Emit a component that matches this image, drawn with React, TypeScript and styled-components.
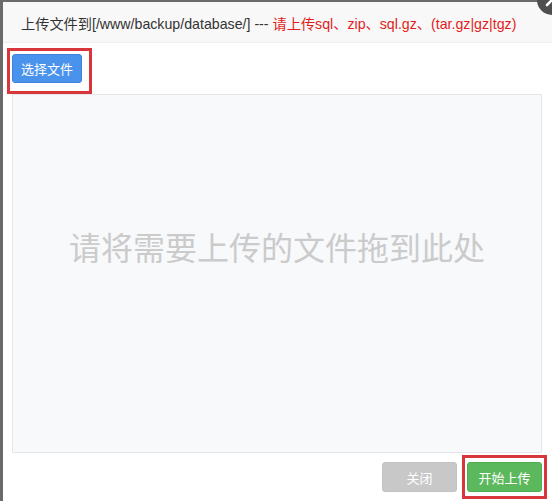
import React from "react";
import styled, { createGlobalStyle } from "styled-components";

const GlobalStyle = createGlobalStyle`
  html, body {
    margin: 0;
    padding: 0;
    background: #6a6a6a;
    overflow: hidden;
  }
  body {
    font-family: "Noto Sans", "Noto Sans CJK SC", sans-serif;
  }
`;

const App: React.FC = () => {
  return (
    <>
      <GlobalStyle />
      <Screen>
        <Dialog>
          <TitleBar>
            上传文件到[/www/backup/database/] ---{" "}
            <Warn>请上传sql、zip、sql.gz、(tar.gz|gz|tgz)</Warn>
          </TitleBar>

          <Toolbar>
            <Mark $pad="3px 7px 8px 2px">
              <Button $tone="blue">选择文件</Button>
            </Mark>
          </Toolbar>

          <DropZone>
            <DropHint>请将需要上传的文件拖到此处</DropHint>
          </DropZone>

          <Footer>
            <Button $tone="gray">关闭</Button>
            <Mark $pad="4px 2px">
              <Button $tone="green">开始上传</Button>
            </Mark>
          </Footer>

          <CloseIcon aria-label="close">
            <svg width="30" height="30" viewBox="0 0 30 30">
              <circle cx="15" cy="15" r="15" fill="#4f4f4f" />
              <path
                d="M10 10 L20 20 M20 10 L10 20"
                stroke="#fff"
                strokeWidth="2.6"
                strokeLinecap="round"
              />
            </svg>
          </CloseIcon>
        </Dialog>
      </Screen>
    </>
  );
};

export default App;

/* ===================== styles ===================== */
const Screen = styled.div`
  width: 552px;
  height: 501px;
  padding: 2px 0 0 3px;
  box-sizing: border-box;
`;

const Dialog = styled.div`
  position: relative;
  width: 549px;
  height: 499px;
  background: #fff;
  display: flex;
  flex-direction: column;
`;

const TitleBar = styled.div`
  height: 41px;
  box-sizing: border-box;
  line-height: 40px;
  padding: 2px 0 0 18px;
  background: #f8f8f8;
  border-bottom: 1px solid #eee;
  color: #333;
  font-family: "Liberation Sans", "Noto Sans CJK SC", sans-serif;
  font-size: 14.2px;
  white-space: nowrap;
  overflow: hidden;
`;

const Warn = styled.span`
  color: #e21d1d;
`;

const Toolbar = styled.div`
  display: flex;
  padding: 5px 0 0 4px;
`;

const Mark = styled.div<{ $pad: string }>`
  display: flex;
  border: 3px solid #d9363b;
  padding: ${({ $pad }) => $pad};
`;

const tones = {
  blue: { bg: "#4a93ec", border: "#3d84da" },
  gray: { bg: "#c8c8c8", border: "#c2c2c2" },
  green: { bg: "#5cb85c", border: "#4fae4f" },
};

const Button = styled.button<{ $tone: keyof typeof tones }>`
  height: ${({ $tone }) => ($tone === "blue" ? "29px" : "30px")};
  width: ${({ $tone }) => ($tone === "blue" ? "70px" : "75px")};
  padding: 0;
  border: 1px solid ${({ $tone }) => tones[$tone].border};
  border-radius: 3px;
  background: ${({ $tone }) => tones[$tone].bg};
  color: #fff;
  font-family: inherit;
  font-size: 13px;
  cursor: pointer;
`;

const DropZone = styled.div`
  margin-left: 9px;
  width: 530px;
  height: 359px;
  box-sizing: border-box;
  border: 1px solid #e4e6ea;
  background: #f8f9fb;
  display: flex;
  justify-content: center;
  padding-top: 133px;
`;

const DropHint = styled.div`
  font-size: 32px;
  line-height: 40px;
  height: 40px;
  color: #cbcbcb;
  white-space: nowrap;
`;

const Footer = styled.div`
  display: flex;
  justify-content: flex-end;
  align-items: center;
  gap: 5px;
  padding: 2px 5px 0 0;
`;

const CloseIcon = styled.div`
  position: absolute;
  top: -17px;
  right: -15px;
  width: 30px;
  height: 30px;
  line-height: 0;
`;
